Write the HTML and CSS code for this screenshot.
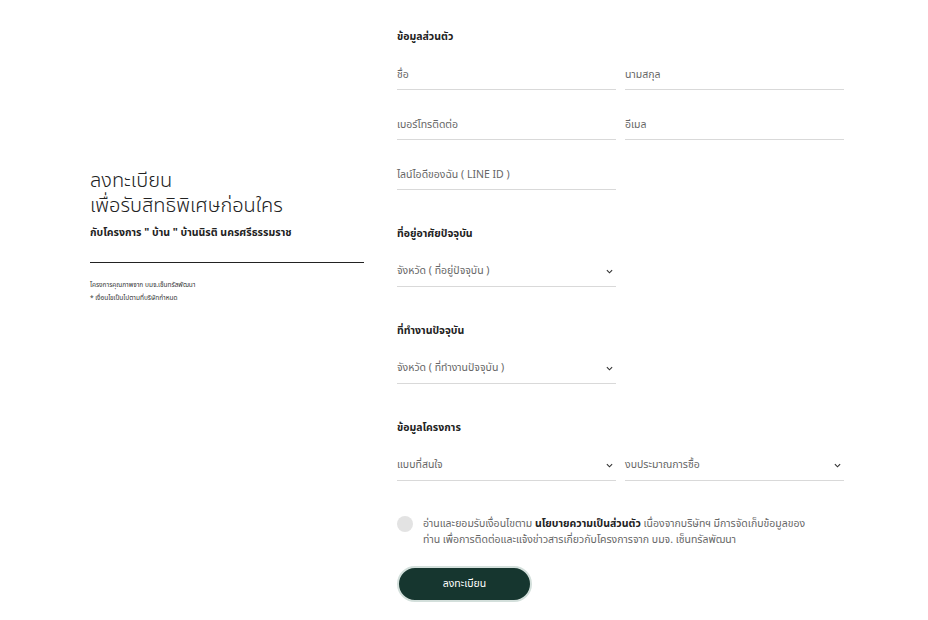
FILE: index.html
```html
<!DOCTYPE html>
<html lang="th">
<head>
<meta charset="UTF-8" />
<meta name="viewport" content="width=device-width, initial-scale=1" />
<title>ลงทะเบียน</title>
<link rel="stylesheet" href="styles.css">
</head>
<body>
  <div class="page">
    <!-- คอลัมน์ซ้าย -->
    <div class="intro">
      <h1>ลงทะเบียน<br>เพื่อรับสิทธิพิเศษก่อนใคร</h1>
      <p class="project">กับโครงการ " บ้าน " บ้านนิรติ นครศรีธรรมราช</p>
      <hr class="rule" />
      <p class="note">โครงการคุณภาพจาก บมจ.เซ็นทรัลพัฒนา</p>
      <p class="note">* เงื่อนไขเป็นไปตามที่บริษัทกำหนด</p>
    </div>

    <!-- ฟอร์ม -->
    <form class="reg-form" autocomplete="off">
      <h3>ข้อมูลส่วนตัว</h3>
      <div class="grid">
        <label class="field">ชื่อ</label>
        <label class="field">นามสกุล</label>
        <label class="field">เบอร์โทรติดต่อ</label>
        <label class="field">อีเมล</label>
        <label class="field">ไลน์ไอดีของฉัน ( LINE ID )</label>
      </div>

      <h3>ที่อยู่อาศัยปัจจุบัน</h3>
      <div class="grid">
        <div class="field select">จังหวัด ( ที่อยู่ปัจจุบัน )
          <svg viewBox="0 0 8 5" width="7" height="5"><path d="M1 1l3 3 3-3" fill="none" stroke="#333" stroke-width="1.3"/></svg>
        </div>
      </div>

      <h3>ที่ทำงานปัจจุบัน</h3>
      <div class="grid">
        <div class="field select">จังหวัด ( ที่ทำงานปัจจุบัน )
          <svg viewBox="0 0 8 5" width="7" height="5"><path d="M1 1l3 3 3-3" fill="none" stroke="#333" stroke-width="1.3"/></svg>
        </div>
      </div>

      <h3>ข้อมูลโครงการ</h3>
      <div class="grid">
        <div class="field select">แบบที่สนใจ
          <svg viewBox="0 0 8 5" width="7" height="5"><path d="M1 1l3 3 3-3" fill="none" stroke="#333" stroke-width="1.3"/></svg>
        </div>
        <div class="field select">งบประมาณการซื้อ
          <svg viewBox="0 0 8 5" width="7" height="5"><path d="M1 1l3 3 3-3" fill="none" stroke="#333" stroke-width="1.3"/></svg>
        </div>
      </div>

      <div class="consent">
        <span class="check"></span>
        <p>อ่านและยอมรับเงื่อนไขตาม <b>นโยบายความเป็นส่วนตัว</b> เนื่องจากบริษัทฯ มีการจัดเก็บข้อมูลของ<br>ท่าน เพื่อการติดต่อและแจ้งข่าวสารเกี่ยวกับโครงการจาก บมจ. เซ็นทรัลพัฒนา</p>
      </div>

      <button type="submit">ลงทะเบียน</button>
    </form>
  </div>
</body>
</html>
```

FILE: styles.css
```css
:root {
  --เขียว: #16362f;
  --เส้น: #d9d9d9;
  --เทา: #666;
}
body {
  margin: 0;
  background: #fff;
  font-family: "Noto Sans", "Noto Sans Thai", sans-serif;
  color: #222;
}
.page {
  display: flex;
  gap: 33px;
  padding: 28px 0 0 90px;
}
.intro {
  width: 274px;
  padding-top: 139px;
}
.intro h1 {
  margin: 0;
  font-size: 20px;
  font-weight: 300;
  line-height: 25px;
  color: #222;
}
.project {
  margin: 7px 0 0;
  font-size: 10.5px;
  font-weight: 700;
  line-height: 16px;
}
.rule {
  margin: 22px 0 0;
  border: 0;
  border-top: 1.5px solid #222;
}
.intro .rule + .note { margin-top: 15px; }
.note {
  margin: 0;
  font-size: 6.5px;
  line-height: 13px;
  color: #333;
}
.reg-form {
  width: 447px;
}
h3 {
  margin: 35px 0 15px;
  font-size: 10.5px;
  font-weight: 700;
  line-height: 16px;
}
h3:first-child { margin-top: 0; margin-bottom: 17px; }
.grid {
  display: grid;
  grid-template-columns: 219px 219px;
  column-gap: 9px;
  row-gap: 21px;
}
.field {
  display: flex;
  align-items: center;
  justify-content: space-between;
  height: 28px;
  font-size: 10.5px;
  color: var(--เทา);
  border-bottom: 1px solid var(--เส้น);
}
.field.select {
  height: 30px;
  padding-right: 3px;
}
.consent {
  display: flex;
  gap: 10px;
  margin-top: 34px;
}
.check {
  flex: none;
  width: 16px;
  height: 16px;
  margin-top: 1px;
  border-radius: 50%;
  background: #e3e3e3;
}
.consent p {
  margin: 0;
  font-size: 10.5px;
  line-height: 16px;
  color: var(--เทา);
}
.consent b { color: #222; }
button {
  margin-top: 19px;
  width: 135px;
  height: 36px;
  border: 2px solid #d3dfdb;
  border-radius: 18px;
  background: var(--เขียว);
  color: #fff;
  font-family: inherit;
  font-size: 10.5px;
  cursor: pointer;
}
```
